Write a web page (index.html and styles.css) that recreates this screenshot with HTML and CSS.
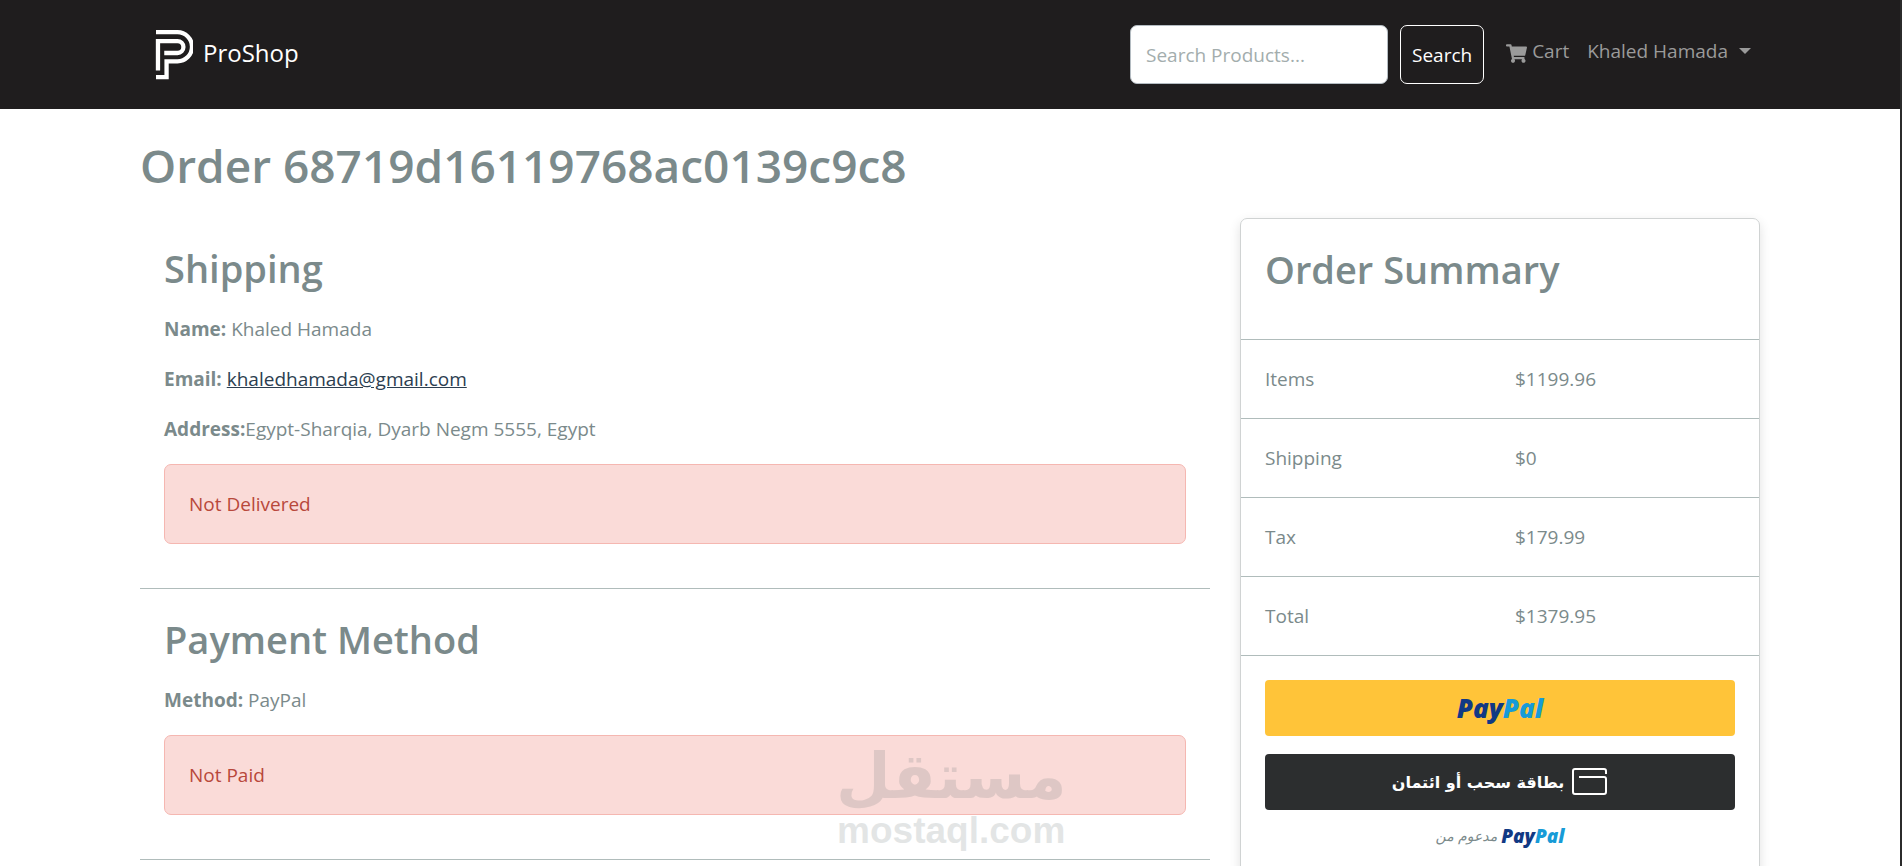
FILE: index.html
```html
<!DOCTYPE html>
<html lang="en">
<head>
  <meta charset="UTF-8">
  <meta name="viewport" content="width=device-width, initial-scale=1.0">
  <title>Order | ProShop</title>
  <link rel="stylesheet" href="styles.css">
</head>
<body>
  <header class="header">
    <nav class="navbar container">
      <a class="brand" href="#">
        <svg class="brand-logo" viewBox="75 84 115 160" fill="none" stroke="#fff" stroke-width="13">
          <path d="M78 95 H143 A43 43 0 0 1 143 183 H110 V231 H78" />
          <path d="M84 211 V122 H143 A17 17 0 0 1 143 158 H103" />
        </svg>
        <span>ProShop</span>
      </a>
      <form class="search">
        <input class="search-input" type="text" placeholder="Search Products..." aria-label="Search Products">
        <button class="search-btn" type="submit">Search</button>
      </form>
      <div class="nav-links">
        <a class="nav-link" href="#">
          <svg class="cart-icon" viewBox="0 0 576 512" fill="currentColor">
            <path d="M528.12 301.319l47.273-208C578.806 78.301 567.391 64 551.99 64H159.208l-9.166-44.81C147.758 8.021 137.93 0 126.529 0H24C10.745 0 0 10.745 0 24v16c0 13.255 10.745 24 24 24h69.883l70.248 343.435C147.325 417.1 136 435.222 136 456c0 30.928 25.072 56 56 56s56-25.072 56-56c0-15.674-6.447-29.835-16.824-40h209.647C430.447 426.165 424 440.326 424 456c0 30.928 25.072 56 56 56s56-25.072 56-56c0-22.172-12.888-41.332-31.579-50.405l5.517-24.276c3.413-15.018-8.002-29.319-23.403-29.319H218.117l-6.545-32h293.145c11.206 0 20.92-7.754 23.403-18.681z" />
          </svg>
          Cart
        </a>
        <a class="nav-link dropdown" href="#">Khaled Hamada</a>
      </div>
    </nav>
  </header>

  <main class="container">
    <h1>Order 68719d16119768ac0139c9c8</h1>
    <div class="row">
      <div class="col">
        <section class="item">
          <h2>Shipping</h2>
          <p><strong>Name:</strong> Khaled Hamada</p>
          <p><strong>Email:</strong> <a href="mailto:khaledhamada@gmail.com">khaledhamada@gmail.com</a></p>
          <p><strong>Address:</strong>Egypt-Sharqia, Dyarb Negm 5555, Egypt</p>
          <div class="alert" role="alert">Not Delivered</div>
        </section>
        <section class="item">
          <h2>Payment Method</h2>
          <p><strong>Method:</strong> PayPal</p>
          <div class="alert" role="alert">Not Paid</div>
        </section>
      </div>

      <div class="col">
        <div class="card">
          <div class="item">
            <h2>Order Summary</h2>
          </div>
          <div class="summary-row"><span>Items</span><span>$1199.96</span></div>
          <div class="summary-row"><span>Shipping</span><span>$0</span></div>
          <div class="summary-row"><span>Tax</span><span>$179.99</span></div>
          <div class="summary-row"><span>Total</span><span>$1379.95</span></div>
          <div class="pay">
            <button class="pay-btn pay-yellow" type="button">
              <span class="paypal">Pay<span>Pal</span></span>
            </button>
            <button class="pay-btn pay-dark" type="button">
              <span lang="ar" dir="rtl">بطاقة سحب أو ائتمان</span>
              <svg class="card-icon" viewBox="0 0 36 28" fill="none" stroke="#fff" stroke-width="2">
                <path d="M34 6 V3 Q34 1 32 1 H3 Q1 1 1 3 V24 Q1 26 3 26 H32 Q34 26 34 24 V11 Q34 9 32 9 H7" />
              </svg>
            </button>
            <div class="powered">
              <span lang="ar" dir="rtl">مدعوم من</span>
              <span class="paypal paypal-small">Pay<span>Pal</span></span>
            </div>
          </div>
        </div>
      </div>
    </div>
  </main>

  <div class="watermark">
    <span class="watermark-ar" lang="ar" dir="rtl">مستقل</span>
    <span class="watermark-en">mostaql.com</span>
  </div>
</body>
</html>
```
FILE: styles.css
```css
* {
  box-sizing: border-box;
}

html {
  min-height: 100%;
  border-right: 2px solid #2b2b2b;
}

body {
  margin: 0;
  background: #fff;
  color: #7b8a8b;
  font-family: "Open Sans", "DejaVu Sans", sans-serif;
  font-size: 19px;
  line-height: 30px;
}

.container {
  width: 100%;
  max-width: 1650px;
  margin: 0 auto;
  padding: 0 15px;
}

/* Navbar */
.header {
  background: #1f1d1e;
  padding: 25px 0;
}

.navbar {
  display: flex;
  align-items: center;
}

.brand {
  display: flex;
  align-items: flex-start;
  gap: 10px;
  margin-right: auto;
  padding-left: 15px;
  color: #fff;
  font-size: 24px;
  line-height: 50px;
  text-decoration: none;
}

.brand-logo {
  width: 38px;
  height: 54px;
}

.search {
  display: flex;
  gap: 12px;
  margin-right: 13px;
}

.search-input {
  width: 258px;
  height: 59px;
  padding: 0 15px;
  border: 1px solid #b4bcc2;
  border-radius: 7px;
  background: #fff;
  font: inherit;
}

.search-input::placeholder {
  color: #a3adad;
}

.search-btn {
  height: 59px;
  padding: 0 11px;
  border: 1px solid #fff;
  border-radius: 7px;
  background: transparent;
  color: #fff;
  font: inherit;
}

.nav-links {
  display: flex;
  align-self: flex-start;
}

.nav-link {
  display: flex;
  align-items: center;
  gap: 5px;
  padding: 11px 9px;
  color: #9a9a9a;
  text-decoration: none;
}

.cart-icon {
  width: 21px;
  height: 19px;
  margin-top: 4px;
}

.dropdown {
  gap: 11px;
}

.dropdown::after {
  content: "";
  border-top: 6px solid;
  border-right: 6px solid transparent;
  border-left: 6px solid transparent;
}

/* Order page */
h1 {
  margin: 28px 0 25px;
  font-size: 46px;
  font-weight: 600;
  line-height: 56px;
}

h2 {
  margin: 0 0 22px;
  font-size: 38px;
  font-weight: 600;
  line-height: 48px;
}

p {
  margin: 0 0 20px;
}

p a {
  color: #2c3e50;
}

.row {
  display: grid;
  grid-template-columns: 2fr 1fr;
  margin: 0 -15px;
}

.col {
  padding: 0 15px;
}

.item {
  padding: 26px 24px 24px;
  border-bottom: 1px solid #b0bcbb;
}

.alert {
  margin-bottom: 20px;
  padding: 24px;
  border: 1px solid #f5b7b1;
  border-radius: 7px;
  background: #fadbd8;
  color: #b8483b;
}

.card {
  border: 1px solid #d0d3d3;
  border-radius: 7px;
  box-shadow: 0 4px 12px rgba(0, 0, 0, 0.12);
}

.summary-row {
  display: grid;
  grid-template-columns: 1fr 1fr;
  gap: 30px;
  padding: 24px;
  border-bottom: 1px solid #b0bcbb;
}

/* Payment buttons */
.pay {
  display: flex;
  flex-direction: column;
  gap: 18px;
  padding: 24px 24px 48px;
}

.pay-btn {
  display: flex;
  align-items: center;
  justify-content: center;
  gap: 8px;
  height: 56px;
  padding: 0;
  border: 0;
  border-radius: 4px;
}

.pay-yellow {
  background: #ffc439;
}

.pay-dark {
  background: #2c2e2f;
  color: #fff;
  font-family: "DejaVu Sans", sans-serif;
  font-size: 16px;
  font-weight: 700;
}

.card-icon {
  width: 36px;
  height: 28px;
}

.paypal {
  color: #113984;
  font-family: "Open Sans", sans-serif;
  font-size: 26px;
  font-style: italic;
  font-weight: 800;
  line-height: 30px;
}

.paypal span {
  color: #179bd7;
}

.powered {
  display: flex;
  align-items: center;
  justify-content: center;
  gap: 4px;
  font-family: "DejaVu Sans", sans-serif;
  font-size: 14px;
  font-style: italic;
  line-height: 16px;
}

.paypal-small {
  font-size: 19px;
  line-height: 12px;
}

/* Stamp over the page */
.watermark {
  position: absolute;
  top: 744px;
  left: 836px;
  display: flex;
  flex-direction: column;
  align-items: center;
  color: #566;
  font-weight: 700;
  opacity: 0.16;
}

.watermark-ar {
  font-family: "DejaVu Sans", sans-serif;
  font-size: 63px;
  line-height: 66px;
}

.watermark-en {
  font-family: "Liberation Sans", sans-serif;
  font-size: 37px;
  line-height: 42px;
}
```
